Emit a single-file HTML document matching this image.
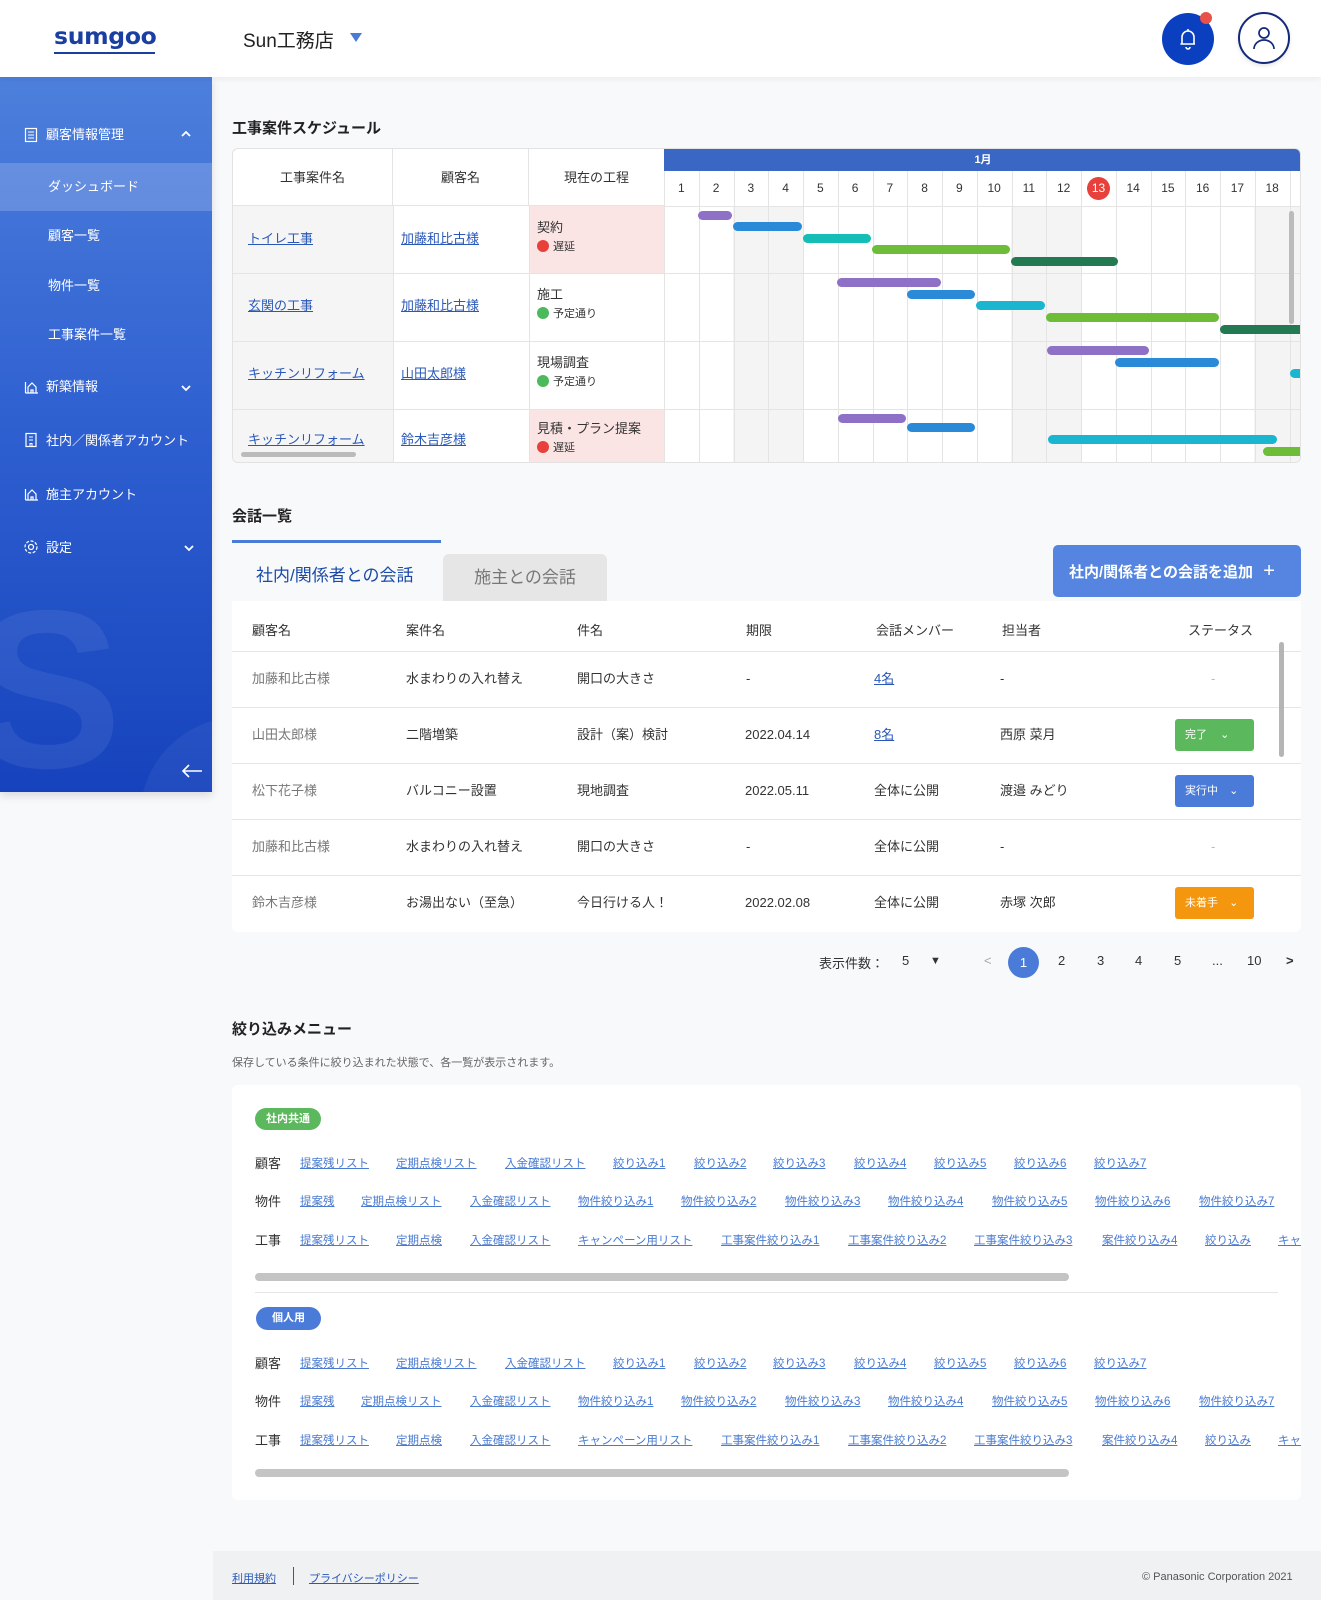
<!DOCTYPE html>
<html><head><meta charset="utf-8"><style>
*{box-sizing:border-box;margin:0;padding:0}
body{width:1321px;height:1600px;position:relative;background:#f8f9fb;font-family:"Liberation Sans","Noto Sans CJK JP",sans-serif;color:#333;overflow:hidden}
.a{position:absolute}
.hdr{left:0;top:0;width:1321px;height:77px;background:#fff;box-shadow:0 2px 6px rgba(0,0,0,.06);z-index:3}
.side{left:0;top:77px;width:212px;height:715px;background:linear-gradient(180deg,#4d7fdc 0%,#2e5fd0 50%,#1643bd 100%);overflow:hidden;box-shadow:0 4px 8px rgba(0,0,0,.12)}
.side .it{position:absolute;left:0;width:212px;color:#fff;font-size:13px;line-height:20px}
.ttl{font-size:15px;font-weight:bold;color:#222}
.g{border-left:1px solid #e4e4e4}
.lk{color:#2a58b8;text-decoration:underline}
.bar{position:absolute;height:9px;border-radius:5px}
.fl{position:absolute;font-size:11.5px;color:#4a7bd0;text-decoration:underline;white-space:nowrap}
.fh{position:absolute;font-size:13px;color:#333}
.ct{position:absolute;font-size:13px;white-space:nowrap;line-height:18px}
.st{position:absolute;left:1175px;width:79px;height:32px;border-radius:3px;color:#fff;font-size:11px;line-height:32px;padding-left:10px}
.pg{position:absolute;top:953px;font-size:13px;color:#333}
</style></head><body>

<div class="a hdr">
  <div class="a" style="left:54px;top:22px;font-size:23.5px;font-weight:bold;color:#1b3fa0;letter-spacing:-0.3px;font-family:'DejaVu Sans','Liberation Sans',sans-serif">sumgoo</div>
  <div class="a" style="left:54px;top:52px;width:101px;height:2px;background:#1b3fa0"></div>
  <div class="a" style="left:243px;top:26px;font-size:19px;color:#222">Sun工務店</div>
  <div class="a" style="left:350px;top:33px;width:0;height:0;border-left:6px solid transparent;border-right:6px solid transparent;border-top:9px solid #4a7bd6"></div>
  <div class="a" style="left:1162px;top:13px;width:52px;height:52px;border-radius:50%;background:#0a3fbf"></div>
  <svg class="a" style="left:1177px;top:27px" width="22" height="24" viewBox="0 0 22 24"><path d="M5 17 V10 a6 6 0 0 1 12 0 V17 H4 H18" fill="none" stroke="#fff" stroke-width="1.6" stroke-linejoin="round"/><path d="M9 20 a2 2 0 0 0 4 0" fill="none" stroke="#fff" stroke-width="1.6"/><path d="M11 2 v2" stroke="#fff" stroke-width="1.6"/></svg>
  <div class="a" style="left:1200px;top:12px;width:12px;height:12px;border-radius:50%;background:#e8504a"></div>
  <div class="a" style="left:1238px;top:12px;width:52px;height:52px;border-radius:50%;border:2px solid #13297a;background:#fff;box-shadow:0 2px 4px rgba(0,0,0,.1)"></div>
  <svg class="a" style="left:1250px;top:24px" width="28" height="28" viewBox="0 0 28 28"><circle cx="14" cy="9" r="5" fill="none" stroke="#13297a" stroke-width="1.7"/><path d="M4 25 a10 9 0 0 1 20 0" fill="none" stroke="#13297a" stroke-width="1.7"/></svg>
</div>

<div class="a side">
  <div class="a" style="left:-28px;top:500px;font-size:225px;font-weight:bold;color:rgba(255,255,255,.07);line-height:1">S</div>
  <div class="a" style="left:140px;top:640px;width:200px;height:200px;border-radius:50%;background:rgba(255,255,255,.05)"></div>
  <div class="it" style="top:48px;padding-left:46px">顧客情報管理</div>
  <svg class="a" style="left:24px;top:50px" width="14" height="16"><rect x="1.5" y="1.5" width="11" height="13" fill="none" stroke="#fff" stroke-width="1.2"/><path d="M4 5h6M4 8h6M4 11h6" stroke="#fff" stroke-width="1"/></svg>
  <svg class="a" style="left:180px;top:52px" width="12" height="10"><path d="M2 7 L6 3 L10 7" fill="none" stroke="#fff" stroke-width="1.8"/></svg>
  <div class="a" style="left:0;top:86px;width:212px;height:48px;background:rgba(255,255,255,.18)"></div>
  <div class="it" style="top:100px;padding-left:48px">ダッシュボード</div>
  <div class="it" style="top:149px;padding-left:48px">顧客一覧</div>
  <div class="it" style="top:199px;padding-left:48px">物件一覧</div>
  <div class="it" style="top:248px;padding-left:48px">工事案件一覧</div>
  <svg class="a" style="left:24px;top:302px" width="15" height="15"><path d="M1.5 14V3M1.5 14H14M4 14V8l4-4 4 4v6M7 14v-3h2v3" fill="none" stroke="#fff" stroke-width="1.2"/></svg>
  <div class="it" style="top:300px;padding-left:46px">新築情報</div>
  <svg class="a" style="left:180px;top:306px" width="12" height="10"><path d="M2 3 L6 7 L10 3" fill="none" stroke="#fff" stroke-width="1.8"/></svg>
  <svg class="a" style="left:24px;top:355px" width="14" height="16"><rect x="2" y="1.5" width="10" height="13" fill="none" stroke="#fff" stroke-width="1.2"/><path d="M5 5h4M5 8h4M6 14.5v-3h2v3" stroke="#fff" stroke-width="1" fill="none"/></svg>
  <div class="it" style="top:354px;padding-left:46px">社内／関係者アカウント</div>
  <svg class="a" style="left:24px;top:409px" width="15" height="15"><path d="M1.5 14V3M1.5 14H14M4 14V8l4-4 4 4v6M7 14v-3h2v3" fill="none" stroke="#fff" stroke-width="1.2"/></svg>
  <div class="it" style="top:408px;padding-left:46px">施主アカウント</div>
  <svg class="a" style="left:23px;top:462px" width="16" height="16"><circle cx="8" cy="8" r="2.5" fill="none" stroke="#fff" stroke-width="1.2"/><circle cx="8" cy="8" r="6" fill="none" stroke="#fff" stroke-width="1.2" stroke-dasharray="3 1.6"/></svg>
  <div class="it" style="top:461px;padding-left:46px">設定</div>
  <svg class="a" style="left:183px;top:466px" width="12" height="10"><path d="M2 3 L6 7 L10 3" fill="none" stroke="#fff" stroke-width="1.8"/></svg>
  <svg class="a" style="left:181px;top:686px" width="22" height="16"><path d="M21 8H2M8 2L2 8l6 6" fill="none" stroke="#fff" stroke-width="1.6"/></svg>
</div>

<!-- Schedule -->
<div class="a ttl" style="left:232px;top:117px">工事案件スケジュール</div>
<div class="a" style="left:232px;top:148px;width:1069px;height:315px;background:#fff;border:1px solid #e2e2e2;border-radius:6px;overflow:hidden">
  <div class="a" style="left:431px;top:0;width:638px;height:22px;background:#3a66c4;color:#fff;font-size:11px;font-weight:bold;text-align:center;line-height:22px">1月</div>
  <div class="a" style="left:0;top:0;width:160px;height:57px;border-right:1px solid #e4e4e4;border-bottom:1px solid #e4e4e4;text-align:center;line-height:57px;font-size:13px">工事案件名</div>
  <div class="a" style="left:160px;top:0;width:136px;height:57px;border-right:1px solid #e4e4e4;border-bottom:1px solid #e4e4e4;text-align:center;line-height:57px;font-size:13px">顧客名</div>
  <div class="a" style="left:296px;top:0;width:135px;height:57px;border-bottom:1px solid #e4e4e4;text-align:center;line-height:57px;font-size:13px">現在の工程</div>
  <div class="a" style="left:0;top:57px;width:160px;height:258px;background:#f5f5f5"></div>
  <div class="a" style="left:296px;top:57px;width:135px;height:67px;background:#fbe4e4"></div>
  <div class="a" style="left:296px;top:260px;width:135px;height:55px;background:#fbe4e4"></div>
  <div class="a" style="left:500px;top:57px;width:70px;height:258px;background:#f4f4f4"></div>
  <div class="a" style="left:778px;top:57px;width:70px;height:258px;background:#f4f4f4"></div>
  <div class="a" style="left:1021px;top:57px;width:48px;height:258px;background:#f4f4f4"></div>
  <div class="a" style="left:0;top:124px;width:1069px;border-top:1px solid #e4e4e4"></div>
  <div class="a" style="left:0;top:192px;width:1069px;border-top:1px solid #e4e4e4"></div>
  <div class="a" style="left:0;top:260px;width:1069px;border-top:1px solid #e4e4e4"></div>
  <div class="a" style="left:431px;top:57px;width:638px;border-top:1px solid #e4e4e4"></div>
  <div class="a" style="left:160px;top:57px;height:258px;border-left:1px solid #e4e4e4"></div>
  <div class="a" style="left:296px;top:57px;height:258px;border-left:1px solid #e4e4e4"></div>
  <div class="a" style="left:431px;top:22px;width:638px;height:293px;display:flex">
    <div class="g" style="width:34.75px;flex:none"></div><div class="g" style="width:34.75px;flex:none"></div><div class="g" style="width:34.75px;flex:none"></div><div class="g" style="width:34.75px;flex:none"></div><div class="g" style="width:34.75px;flex:none"></div><div class="g" style="width:34.75px;flex:none"></div><div class="g" style="width:34.75px;flex:none"></div><div class="g" style="width:34.75px;flex:none"></div><div class="g" style="width:34.75px;flex:none"></div><div class="g" style="width:34.75px;flex:none"></div><div class="g" style="width:34.75px;flex:none"></div><div class="g" style="width:34.75px;flex:none"></div><div class="g" style="width:34.75px;flex:none"></div><div class="g" style="width:34.75px;flex:none"></div><div class="g" style="width:34.75px;flex:none"></div><div class="g" style="width:34.75px;flex:none"></div><div class="g" style="width:34.75px;flex:none"></div><div class="g" style="width:34.75px;flex:none"></div><div class="g" style="width:12px;flex:none"></div>
  </div>
  <div class="a" style="left:431px;top:22px;width:638px;height:35px;display:flex;font-size:12px;line-height:35px;text-align:center">
    <div style="width:34.75px;flex:none">1</div><div style="width:34.75px;flex:none">2</div><div style="width:34.75px;flex:none">3</div><div style="width:34.75px;flex:none">4</div><div style="width:34.75px;flex:none">5</div><div style="width:34.75px;flex:none">6</div><div style="width:34.75px;flex:none">7</div><div style="width:34.75px;flex:none">8</div><div style="width:34.75px;flex:none">9</div><div style="width:34.75px;flex:none">10</div><div style="width:34.75px;flex:none">11</div><div style="width:34.75px;flex:none">12</div><div style="width:34.75px;flex:none;position:relative"><span style="position:absolute;left:6px;top:6px;width:23px;height:23px;border-radius:50%;background:#e8403a;color:#fff;line-height:23px">13</span></div><div style="width:34.75px;flex:none">14</div><div style="width:34.75px;flex:none">15</div><div style="width:34.75px;flex:none">16</div><div style="width:34.75px;flex:none">17</div><div style="width:34.75px;flex:none">18</div>
  </div>
  <div class="a lk" style="left:15px;top:79px;font-size:13px">トイレ工事</div>
  <div class="a lk" style="left:168px;top:79px;font-size:13px">加藤和比古様</div>
  <div class="a" style="left:304px;top:68px;font-size:13px">契約</div>
  <div class="a" style="left:304px;top:89px;font-size:11px"><span style="display:inline-block;width:12px;height:12px;border-radius:50%;background:#e8403a;vertical-align:-2px;margin-right:4px"></span>遅延</div>
  <div class="a lk" style="left:15px;top:146px;font-size:13px">玄関の工事</div>
  <div class="a lk" style="left:168px;top:146px;font-size:13px">加藤和比古様</div>
  <div class="a" style="left:304px;top:135px;font-size:13px">施工</div>
  <div class="a" style="left:304px;top:156px;font-size:11px"><span style="display:inline-block;width:12px;height:12px;border-radius:50%;background:#4cba5c;vertical-align:-2px;margin-right:4px"></span>予定通り</div>
  <div class="a lk" style="left:15px;top:214px;font-size:13px">キッチンリフォーム</div>
  <div class="a lk" style="left:168px;top:214px;font-size:13px">山田太郎様</div>
  <div class="a" style="left:304px;top:203px;font-size:13px">現場調査</div>
  <div class="a" style="left:304px;top:224px;font-size:11px"><span style="display:inline-block;width:12px;height:12px;border-radius:50%;background:#4cba5c;vertical-align:-2px;margin-right:4px"></span>予定通り</div>
  <div class="a lk" style="left:15px;top:280px;font-size:13px">キッチンリフォーム</div>
  <div class="a lk" style="left:168px;top:280px;font-size:13px">鈴木吉彦様</div>
  <div class="a" style="left:304px;top:269px;font-size:13px">見積・プラン提案</div>
  <div class="a" style="left:304px;top:290px;font-size:11px"><span style="display:inline-block;width:12px;height:12px;border-radius:50%;background:#e8403a;vertical-align:-2px;margin-right:4px"></span>遅延</div>
  <div class="a" style="left:8px;top:303px;width:115px;height:5px;border-radius:3px;background:#bbb"></div>
  <div class="a" style="left:1056px;top:62px;width:5px;height:113px;border-radius:3px;background:#bbb"></div>
</div>
<div class="a" style="left:663px;top:148px;width:637px;height:315px;overflow:hidden">
  <div class="bar" style="left:35px;top:63px;width:34px;background:#8e70c6"></div>
  <div class="bar" style="left:70px;top:74px;width:69px;background:#2a8ad8"></div>
  <div class="bar" style="left:140px;top:86px;width:68px;background:#14bdb6"></div>
  <div class="bar" style="left:209px;top:97px;width:138px;background:#6dbd38"></div>
  <div class="bar" style="left:348px;top:109px;width:107px;background:#237a52"></div>
  <div class="bar" style="left:174px;top:130px;width:104px;background:#8e70c6"></div>
  <div class="bar" style="left:244px;top:142px;width:68px;background:#2a8ad8"></div>
  <div class="bar" style="left:313px;top:153px;width:69px;background:#1ab6d0"></div>
  <div class="bar" style="left:383px;top:165px;width:173px;background:#6dbd38"></div>
  <div class="bar" style="left:557px;top:177px;width:100px;background:#237a52"></div>
  <div class="bar" style="left:384px;top:198px;width:102px;background:#8e70c6"></div>
  <div class="bar" style="left:452px;top:210px;width:104px;background:#2a8ad8"></div>
  <div class="bar" style="left:627px;top:221px;width:30px;background:#1ab6d0"></div>
  <div class="bar" style="left:175px;top:266px;width:68px;background:#8e70c6"></div>
  <div class="bar" style="left:244px;top:275px;width:68px;background:#2a8ad8"></div>
  <div class="bar" style="left:385px;top:287px;width:229px;background:#1ab6d0"></div>
  <div class="bar" style="left:600px;top:299px;width:60px;background:#6dbd38"></div>
</div>

<!-- Conversations -->
<div class="a ttl" style="left:232px;top:505px">会話一覧</div>
<div class="a" style="left:232px;top:540px;width:209px;height:3px;background:#4a7bd6"></div>
<div class="a" style="left:256px;top:561px;font-size:17px;color:#1b4aa8">社内/関係者との会話</div>
<div class="a" style="left:443px;top:554px;width:164px;height:47px;background:#e6e6e6;border-radius:6px 6px 0 0;text-align:center;line-height:47px;font-size:17px;color:#777">施主との会話</div>
<div class="a" style="left:1053px;top:545px;width:248px;height:52px;background:#5585e0;border-radius:5px;color:#fff;font-size:15px;font-weight:bold;line-height:52px;padding-left:16px">社内/関係者との会話を追加 <span style="font-weight:normal;font-size:20px;margin-left:6px">+</span></div>
<div class="a" style="left:232px;top:601px;width:1069px;height:331px;background:#fff;border-radius:0 0 6px 6px"></div>
<div class="ct" style="left:252px;top:622px">顧客名</div><div class="ct" style="left:406px;top:622px">案件名</div><div class="ct" style="left:577px;top:622px">件名</div><div class="ct" style="left:746px;top:622px">期限</div><div class="ct" style="left:876px;top:622px">会話メンバー</div><div class="ct" style="left:1002px;top:622px">担当者</div><div class="ct" style="left:1188px;top:622px">ステータス</div>
<div class="a" style="left:232px;top:651px;width:1069px;border-top:1px solid #e5e5e5"></div>
<div class="a" style="left:232px;top:707px;width:1069px;border-top:1px solid #e5e5e5"></div>
<div class="a" style="left:232px;top:763px;width:1069px;border-top:1px solid #e5e5e5"></div>
<div class="a" style="left:232px;top:819px;width:1069px;border-top:1px solid #e5e5e5"></div>
<div class="a" style="left:232px;top:875px;width:1069px;border-top:1px solid #e5e5e5"></div>
<div class="a" style="left:1279px;top:642px;width:5px;height:115px;border-radius:3px;background:#b5b5b5"></div>

<div class="ct" style="left:252px;top:670px;color:#777">加藤和比古様</div><div class="ct" style="left:406px;top:670px">水まわりの入れ替え</div><div class="ct" style="left:577px;top:670px">開口の大きさ</div><div class="ct" style="left:746px;top:670px">-</div><div class="ct lk" style="left:874px;top:670px">4名</div><div class="ct" style="left:1000px;top:670px">-</div><div class="ct" style="left:1211px;top:670px;color:#bbb">-</div>
<div class="ct" style="left:252px;top:726px;color:#777">山田太郎様</div><div class="ct" style="left:406px;top:726px">二階増築</div><div class="ct" style="left:577px;top:726px">設計（案）検討</div><div class="ct" style="left:745px;top:726px">2022.04.14</div><div class="ct lk" style="left:874px;top:726px">8名</div><div class="ct" style="left:1000px;top:726px">西原 菜月</div>
<div class="st" style="top:719px;background:#5cb85c">完了 <span style="margin-left:10px">⌄</span></div>
<div class="ct" style="left:252px;top:782px;color:#777">松下花子様</div><div class="ct" style="left:406px;top:782px">バルコニー設置</div><div class="ct" style="left:577px;top:782px">現地調査</div><div class="ct" style="left:745px;top:782px">2022.05.11</div><div class="ct" style="left:874px;top:782px">全体に公開</div><div class="ct" style="left:1000px;top:782px">渡邉 みどり</div>
<div class="st" style="top:775px;background:#4a7bd9">実行中 <span style="margin-left:8px">⌄</span></div>
<div class="ct" style="left:252px;top:838px;color:#777">加藤和比古様</div><div class="ct" style="left:406px;top:838px">水まわりの入れ替え</div><div class="ct" style="left:577px;top:838px">開口の大きさ</div><div class="ct" style="left:746px;top:838px">-</div><div class="ct" style="left:874px;top:838px">全体に公開</div><div class="ct" style="left:1000px;top:838px">-</div><div class="ct" style="left:1211px;top:838px;color:#bbb">-</div>
<div class="ct" style="left:252px;top:894px;color:#777">鈴木吉彦様</div><div class="ct" style="left:406px;top:894px">お湯出ない（至急）</div><div class="ct" style="left:577px;top:894px">今日行ける人！</div><div class="ct" style="left:745px;top:894px">2022.02.08</div><div class="ct" style="left:874px;top:894px">全体に公開</div><div class="ct" style="left:1000px;top:894px">赤塚 次郎</div>
<div class="st" style="top:887px;background:#f5960f">未着手 <span style="margin-left:8px">⌄</span></div>

<!-- pagination -->
<div class="pg" style="left:819px">表示件数：</div>
<div class="pg" style="left:902px">5</div>
<div class="pg" style="left:930px;font-size:11px;top:955px">▼</div>
<div class="pg" style="left:984px;color:#aaa">&lt;</div>
<div class="a" style="left:1008px;top:947px;width:31px;height:31px;border-radius:50%;background:#4a7bd9;color:#fff;text-align:center;line-height:31px;font-size:13px">1</div>
<div class="pg" style="left:1058px">2</div><div class="pg" style="left:1097px">3</div><div class="pg" style="left:1135px">4</div><div class="pg" style="left:1174px">5</div><div class="pg" style="left:1212px">...</div><div class="pg" style="left:1247px">10</div><div class="pg" style="left:1286px;font-weight:bold">&gt;</div>

<!-- Filter -->
<div class="a ttl" style="left:232px;top:1018px">絞り込みメニュー</div>
<div class="a" style="left:232px;top:1054px;font-size:11px;color:#666">保存している条件に絞り込まれた状態で、各一覧が表示されます。</div>
<div class="a" style="left:232px;top:1085px;width:1069px;height:415px;background:#fff;border-radius:6px;overflow:hidden">
  <div class="a" style="left:23px;top:23px;width:66px;height:22px;border-radius:11px;background:#5cb85c;color:#fff;font-size:11px;font-weight:bold;text-align:center;line-height:22px">社内共通</div>
  <div class="a" style="left:23px;top:188px;width:814px;height:8px;border-radius:4px;background:#c4c4c4"></div>
  <div class="a" style="left:23px;top:207px;width:1023px;border-top:1px solid #e5e5e5"></div>
  <div class="a" style="left:24px;top:222px;width:65px;height:23px;border-radius:12px;background:#4a7bd9;color:#fff;font-size:11px;font-weight:bold;text-align:center;line-height:23px">個人用</div>
  <div class="a" style="left:23px;top:384px;width:814px;height:8px;border-radius:4px;background:#c4c4c4"></div>
</div>
<div class="a" style="left:0;top:0;width:1301px;height:1500px;overflow:hidden;pointer-events:none">
<div class="fh" style="left:255px;top:1153px">顧客</div>
<div class="fl" style="left:300px;top:1155px">提案残リスト</div><div class="fl" style="left:396px;top:1155px">定期点検リスト</div><div class="fl" style="left:505px;top:1155px">入金確認リスト</div><div class="fl" style="left:613px;top:1155px">絞り込み1</div><div class="fl" style="left:694px;top:1155px">絞り込み2</div><div class="fl" style="left:773px;top:1155px">絞り込み3</div><div class="fl" style="left:854px;top:1155px">絞り込み4</div><div class="fl" style="left:934px;top:1155px">絞り込み5</div><div class="fl" style="left:1014px;top:1155px">絞り込み6</div><div class="fl" style="left:1094px;top:1155px">絞り込み7</div>
<div class="fh" style="left:255px;top:1191px">物件</div>
<div class="fl" style="left:300px;top:1193px">提案残</div><div class="fl" style="left:361px;top:1193px">定期点検リスト</div><div class="fl" style="left:470px;top:1193px">入金確認リスト</div><div class="fl" style="left:578px;top:1193px">物件絞り込み1</div><div class="fl" style="left:681px;top:1193px">物件絞り込み2</div><div class="fl" style="left:785px;top:1193px">物件絞り込み3</div><div class="fl" style="left:888px;top:1193px">物件絞り込み4</div><div class="fl" style="left:992px;top:1193px">物件絞り込み5</div><div class="fl" style="left:1095px;top:1193px">物件絞り込み6</div><div class="fl" style="left:1199px;top:1193px">物件絞り込み7</div>
<div class="fh" style="left:255px;top:1230px">工事</div>
<div class="fl" style="left:300px;top:1232px">提案残リスト</div><div class="fl" style="left:396px;top:1232px">定期点検</div><div class="fl" style="left:470px;top:1232px">入金確認リスト</div><div class="fl" style="left:578px;top:1232px">キャンペーン用リスト</div><div class="fl" style="left:721px;top:1232px">工事案件絞り込み1</div><div class="fl" style="left:848px;top:1232px">工事案件絞り込み2</div><div class="fl" style="left:974px;top:1232px">工事案件絞り込み3</div><div class="fl" style="left:1102px;top:1232px">案件絞り込み4</div><div class="fl" style="left:1205px;top:1232px">絞り込み</div><div class="fl" style="left:1278px;top:1232px">キャンペーン</div>
<div class="fh" style="left:255px;top:1353px">顧客</div>
<div class="fl" style="left:300px;top:1355px">提案残リスト</div><div class="fl" style="left:396px;top:1355px">定期点検リスト</div><div class="fl" style="left:505px;top:1355px">入金確認リスト</div><div class="fl" style="left:613px;top:1355px">絞り込み1</div><div class="fl" style="left:694px;top:1355px">絞り込み2</div><div class="fl" style="left:773px;top:1355px">絞り込み3</div><div class="fl" style="left:854px;top:1355px">絞り込み4</div><div class="fl" style="left:934px;top:1355px">絞り込み5</div><div class="fl" style="left:1014px;top:1355px">絞り込み6</div><div class="fl" style="left:1094px;top:1355px">絞り込み7</div>
<div class="fh" style="left:255px;top:1391px">物件</div>
<div class="fl" style="left:300px;top:1393px">提案残</div><div class="fl" style="left:361px;top:1393px">定期点検リスト</div><div class="fl" style="left:470px;top:1393px">入金確認リスト</div><div class="fl" style="left:578px;top:1393px">物件絞り込み1</div><div class="fl" style="left:681px;top:1393px">物件絞り込み2</div><div class="fl" style="left:785px;top:1393px">物件絞り込み3</div><div class="fl" style="left:888px;top:1393px">物件絞り込み4</div><div class="fl" style="left:992px;top:1393px">物件絞り込み5</div><div class="fl" style="left:1095px;top:1393px">物件絞り込み6</div><div class="fl" style="left:1199px;top:1393px">物件絞り込み7</div>
<div class="fh" style="left:255px;top:1430px">工事</div>
<div class="fl" style="left:300px;top:1432px">提案残リスト</div><div class="fl" style="left:396px;top:1432px">定期点検</div><div class="fl" style="left:470px;top:1432px">入金確認リスト</div><div class="fl" style="left:578px;top:1432px">キャンペーン用リスト</div><div class="fl" style="left:721px;top:1432px">工事案件絞り込み1</div><div class="fl" style="left:848px;top:1432px">工事案件絞り込み2</div><div class="fl" style="left:974px;top:1432px">工事案件絞り込み3</div><div class="fl" style="left:1102px;top:1432px">案件絞り込み4</div><div class="fl" style="left:1205px;top:1432px">絞り込み</div><div class="fl" style="left:1278px;top:1432px">キャンペーン</div>
</div>

<!-- footer -->
<div class="a" style="left:213px;top:1551px;width:1108px;height:49px;background:#f0f1f3"></div>
<div class="a" style="left:232px;top:1570px;font-size:11px;color:#2a58b8;text-decoration:underline">利用規約</div>
<div class="a" style="left:293px;top:1567px;height:18px;border-left:1px solid #555"></div>
<div class="a" style="left:309px;top:1570px;font-size:11px;color:#2a58b8;text-decoration:underline">プライバシーポリシー</div>
<div class="a" style="left:1142px;top:1571px;font-size:11px;color:#555">© Panasonic Corporation 2021</div>
</body></html>
